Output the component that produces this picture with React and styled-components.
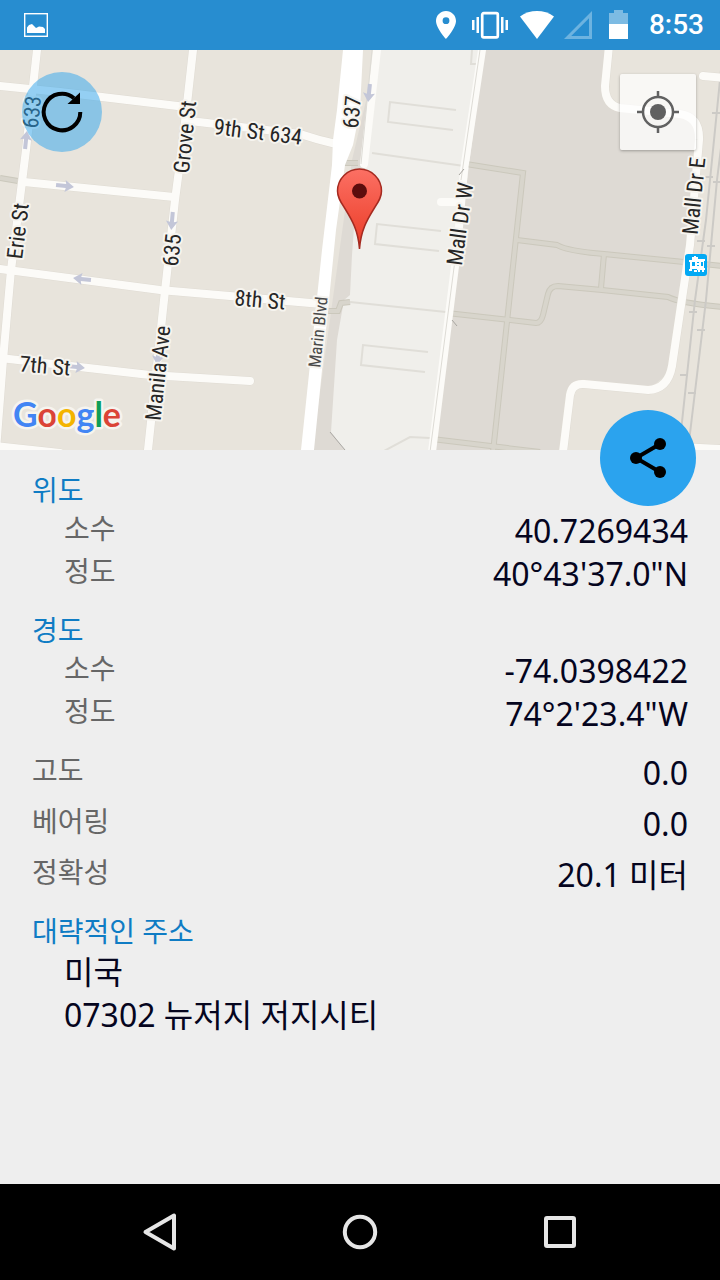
import React, { Fragment } from 'react';
import styled, { createGlobalStyle, css } from 'styled-components';

const GlobalStyle = createGlobalStyle`
  * {
    box-sizing: border-box;
  }
  body {
    margin: 0;
    background: #eeeeee;
    font-family: 'Noto Sans', 'Noto Sans CJK KR', sans-serif;
  }
  dl, dd, h2, p {
    margin: 0;
  }
`;

const Screen = styled.div`
  display: flex;
  flex-direction: column;
  min-height: 100vh;
`;

const StatusBar = styled.header`
  display: flex;
  align-items: center;
  gap: 12px;
  height: 50px;
  padding: 0 16px 0 24px;
  background: #278dd0;
  color: #ffffff;
  svg {
    display: block;
    flex: none;
  }
`;

const Spacer = styled.span`
  flex: 1;
`;

const Clock = styled.time`
  margin-left: 9px;
  font: 500 28px/32px Roboto, sans-serif;
`;

const MapArea = styled.section`
  position: relative;
  height: 400px;
`;

const MapCanvas = styled.svg`
  display: block;
  width: 100%;
  height: 100%;
`;

const StreetName = styled.text`
  font-family: 'Roboto Condensed', 'Liberation Sans Narrow', Roboto, sans-serif;
  font-size: ${({ $small }) => ($small ? '17px' : '22px')};
  fill: ${({ $small }) => ($small ? '#4a4a4a' : '#262626')};
  stroke: #f6f4ef;
  stroke-width: 4px;
  stroke-linejoin: round;
  paint-order: stroke;
  text-anchor: middle;
  dominant-baseline: central;
`;

const Brand = styled.text`
  font-family: Lato, sans-serif;
  font-size: 34px;
  font-weight: 700;
  stroke: #f6f4ef;
  stroke-width: 5px;
  stroke-linejoin: round;
  paint-order: stroke;
`;

const overMap = css`
  position: absolute;
  display: flex;
  align-items: center;
  justify-content: center;
  padding: 0;
  border: 0;
  cursor: pointer;
`;

const RefreshButton = styled.button`
  ${overMap}
  top: 22px;
  left: 22px;
  width: 80px;
  height: 80px;
  border-radius: 50%;
  background: rgba(43, 163, 238, 0.5);
`;

const LocateButton = styled.button`
  ${overMap}
  top: 24px;
  right: 24px;
  width: 76px;
  height: 76px;
  border-radius: 2px;
  background: rgba(255, 255, 255, 0.72);
  box-shadow: 0 1px 3px rgba(0, 0, 0, 0.3);
`;

const ShareButton = styled.button`
  ${overMap}
  right: 24px;
  bottom: -56px;
  width: 96px;
  height: 96px;
  border-radius: 50%;
  background: #2ba3ee;
`;

const Details = styled.main`
  display: flex;
  flex: 1;
  flex-direction: column;
  gap: 16px;
  padding: 21px 32px;
`;

const GroupTitle = styled.h2`
  color: #0f7cc4;
  font-size: 28px;
  font-weight: 400;
  line-height: 38px;
`;

const Rows = styled.dl`
  display: flex;
  flex-direction: column;
  gap: ${({ $loose }) => ($loose ? '8px' : '0')};
  padding-left: ${({ $indent }) => ($indent ? '32px' : '0')};
`;

const Row = styled.div`
  display: flex;
  align-items: flex-start;
  justify-content: space-between;
`;

const Label = styled.dt`
  color: #666666;
  font-size: 28px;
  line-height: 38px;
`;

const Value = styled.dd`
  color: #05051e;
  font-size: 32px;
  line-height: 43px;
`;

const Address = styled.p`
  padding-left: 32px;
  color: #05051e;
  font-size: 32px;
  line-height: 43px;
`;

const NavBar = styled.nav`
  display: flex;
  align-items: center;
  justify-content: center;
  gap: 104px;
  height: 96px;
  background: #000000;
`;

const NavButton = styled.button`
  display: flex;
  align-items: center;
  justify-content: center;
  width: 96px;
  height: 96px;
  padding: 0;
  border: 0;
  background: transparent;
  cursor: pointer;
`;

const coordinates = [
  { title: '위도', rows: [['소수', '40.7269434'], ['정도', '40°43\'37.0"N']] },
  { title: '경도', rows: [['소수', '-74.0398422'], ['정도', '74°2\'23.4"W']] },
];

const readings = [
  ['고도', '0.0'],
  ['베어링', '0.0'],
  ['정확성', '20.1 미터'],
];

const streets = [
  'M37 50L26 150L11 270L3 360L-4 450',
  'M193 50L183 140L175 200L164 300L148 450',
  'M0 86L60 92L186 107',
  'M190 121L300 134Q318 140 336 144',
  'M24 182L174 197',
  'M0 269L160 290L322 304',
  'M0 358L150 375L250 381',
  'M-4 446L60 453',
  'M609 46L605 86Q605 105 620 108L680 114Q700 117 699 140L690 245L672 366Q668 389 648 390L584 384Q572 383 570 395L563 452',
  'M703 76L726 78',
  'M680 447L722 449',
];

const footpaths = [
  'M466 164L523 173L493 452',
  'M447 313L536 323Q541 323 543 315L548 294Q550 286 558 286L602 290L668 297Q680 303 722 307',
  'M517 240L557 245Q567 251 604 254L684 262L722 266',
  'M604 254L601 288',
  'M432 439L540 452',
  'M0 178L18 181',
  'M326 311L338 311L341 303L350 302',
  'M343 163L358 163',
];

const faintLines = [
  'M372 153L464 166',
  'M350 302L446 312',
  'M384 451L410 437L430 438',
  'M456 110L390 102L388 122L453 130',
  'M441 231L377 224L375 244L439 251',
  'M428 352L363 345L361 365L425 372',
  'M472 50L471 64L476 64',
];

const arrows = [
  [65, 186, 6],
  [172, 221, 95],
  [82, 279, 186],
  [76, 367, 6],
  [26, 140, -84],
  [369, 93, 96],
  [158, 356, 96],
];

const labels = [
  ['633', 32, 112, -84],
  ['Erie St', 18, 231, -83],
  ['Grove St', 185, 137, -84],
  ['635', 172, 250, -84],
  ['Manila Ave', 158, 373, -84],
  ['9th St 634', 258, 132, 7],
  ['8th St', 260, 300, 5],
  ['7th St', 45, 366, 5],
  ['637', 352, 112, -85],
  ['Mall Dr W', 460, 224, -82],
  ['Mall Dr E', 694, 196, -84],
];

const ticks = [
  [716, 113], [709, 177], [717, 182], [701, 241], [711, 246],
  [693, 312], [701, 330], [684, 375], [692, 393],
];

const StreetMap = () => (
  <MapCanvas viewBox='0 50 720 400' preserveAspectRatio='xMidYMid slice' role='img' aria-label='Map'>
    <rect y='50' width='720' height='400' fill='#e8e4dc' />
    <path
      d='M352 160L378 50H607L605 90L620 108L680 114L699 130L690 245L672 370L648 390L582 384L570 392L563 450H312Z'
      fill='#dedad4'
    />
    <path d='M378 50H484L432 450H345L331 432L337 340L344 300L350 295L352 255L356 200L366 165Z' fill='#f0efeb' />
    <path d='M330 432L345 450' stroke='#aaa8a4' />
    {/* footpaths are a pale strip with a darker edge */}
    <g fill='none' stroke='#cbc8bc' strokeWidth='6'>
      {footpaths.map(d => <path key={d} d={d} />)}
    </g>
    <g fill='none' stroke='#d8d5cc' strokeWidth='4'>
      {footpaths.map(d => <path key={d} d={d} />)}
    </g>
    <g fill='none' stroke='#e0ded8' strokeWidth='2'>
      {faintLines.map(d => <path key={d} d={d} />)}
    </g>
    <g fill='none' stroke='#cccac6' strokeWidth='2'>
      <path d='M722 60L706 220L695 300L679 450' />
      <path d='M732 60L717 180L706 300L688 450' />
      {ticks.map(([x, y]) => <path key={`${x}-${y}`} d={`M${x - 4} ${y}h8`} />)}
    </g>
    <g fill='none' stroke='#dfdbd3' strokeWidth='9' strokeLinecap='round'>
      {streets.map(d => <path key={d} d={d} />)}
    </g>
    <g fill='none' stroke='#fcfbf8' strokeWidth='8' strokeLinecap='round'>
      {streets.map(d => <path key={d} d={d} />)}
      <path d='M377 50L364 164' />
      <path d='M482 50L464 170L457 250L432 452' />
      <path d='M441 202H458' />
    </g>
    <path d='M372 50L361 164M480 50L461 180M455 260L430 452' fill='none' stroke='#dddbd5' />
    <path d='M452 320l5 6M459 175l5-6' stroke='#a8a6a1' />
    <path
      d='M343 50H363L360 110L353 145L345 165L336 230L314 450H301L322 250L332 165L333 140L337 110Z'
      fill='#ffffff'
    />
    <g fill='#c3c6d8'>
      {arrows.map(([x, y, angle]) => (
        <path
          key={`${x}-${y}`}
          d='M-9-2H1L0-6L9 0L0 6L1 2H-9Z'
          transform={`translate(${x} ${y}) rotate(${angle})`}
        />
      ))}
    </g>
    {labels.map(([name, x, y, angle]) => (
      <StreetName key={name} transform={`translate(${x} ${y}) rotate(${angle})`}>{name}</StreetName>
    ))}
    <StreetName $small transform='translate(318 332) rotate(-84)'>Marin Blvd</StreetName>
    <rect x='685' y='254' width='22' height='22' rx='3' fill='#03a9f4' />
    <path
      d='M689 260h3v-3h2v-1h2v1h2v2h7v2h-1v7h1v2h-8v-1h-5v2h-3v-2h1v-7h-1zM692 262v4h3v-4zM697 262v1h2v-1zM697 265v1h2v-1zM701 262v4h2v-4zM694 270h3v2h-3zM698 270h2v2h-2zM702 270h2v2h-2z'
      fill='#ffffff'
      fillRule='evenodd'
    />
    <defs>
      <linearGradient id='marker' x1='0' y1='0' x2='0' y2='1'>
        <stop offset='0' stopColor='#fc7064' />
        <stop offset='1' stopColor='#ea3a24' />
      </linearGradient>
    </defs>
    <path
      d='M359.500 249C358 228 350 217 344 207C340 201 337.500 197 337.500 191A22 22 0 0 1 381.500 191C381.500 197 379 201 375 207C369 217 361 228 359.500 249Z'
      fill='url(#marker)'
      stroke='#a52a20'
      strokeWidth='1.500'
    />
    <circle cx='359.500' cy='191' r='7.500' fill='#5c0d0d' />
    <Brand x='13' y='427'>
      <tspan fill='#4285f4'>G</tspan>
      <tspan fill='#db4437'>o</tspan>
      <tspan fill='#f4b400'>o</tspan>
      <tspan fill='#4285f4'>g</tspan>
      <tspan fill='#0f9d58'>l</tspan>
      <tspan fill='#db4437'>e</tspan>
    </Brand>
  </MapCanvas>
);

const StatusIcons = () => (
  <Fragment>
    <svg width='24' height='30' viewBox='0 0 24 30' fill='#ffffff'>
      <path fillRule='evenodd' d='M10 1C4.500 1 0 5.400 0 11C0 18 10 29 10 29S20 18 20 11C20 5.400 15.500 1 10 1ZM10 7.300A3.400 3.400 0 1 1 10 14.100A3.400 3.400 0 0 1 10 7.300Z' />
    </svg>
    <svg width='36' height='30' viewBox='0 0 36 30' fill='#ffffff'>
      <path d='M0 10h2.500v10H0zM4.500 7h2.500v16H4.500zM29 7h2.500v16H29zM33.500 10H36v10h-2.500z' />
      <rect x='10.200' y='3.200' width='15.600' height='24.100' rx='1.500' fill='none' stroke='#ffffff' strokeWidth='2.700' />
    </svg>
    <svg width='34' height='30' viewBox='0 0 34 30'>
      <path d='M0 6.500C5 2.800 11 1 17 1S29 2.800 34 6.500L17 29Z' fill='#ffffff' />
    </svg>
    <svg width='26' height='30' viewBox='0 0 26 30' overflow='visible'>
      <path fillRule='evenodd' d='M26 1V29H-2ZM23 8.200L5.200 26H23Z' fill='#6db3e0' />
    </svg>
    <svg width='24' height='30' viewBox='0 0 24 30'>
      <path d='M5 14V3h5V0h9v3h5v11z' fill='#7dbbe3' />
      <path d='M5 14h19v15H5z' fill='#ffffff' />
    </svg>
  </Fragment>
);

const App = () => (
  <Screen>
    <GlobalStyle />
    <StatusBar>
      <svg width='24' height='24' viewBox='0 0 24 24'>
        <rect x='0.700' y='0.700' width='22.600' height='22.600' fill='none' stroke='#ffffff' strokeWidth='1.400' />
        <path d='M3 20V14.500L5 12L8 11L10 13L12 15L15 13.500L19 14L21 16V20Z' fill='#ffffff' />
      </svg>
      <Spacer />
      <StatusIcons />
      <Clock>8:53</Clock>
    </StatusBar>
    <MapArea>
      <StreetMap />
      <RefreshButton aria-label='Refresh'>
        <svg width='42' height='42' viewBox='0 0 42 42'>
          <path d='M39.300 21A18.300 18.300 0 1 1 33 7.200' fill='none' stroke='#000000' strokeWidth='4' />
          <path d='M39 1.500V13H26.500Z' fill='#000000' />
        </svg>
      </RefreshButton>
      <LocateButton aria-label='My location'>
        <svg width='42' height='42' viewBox='0 0 42 42' fill='none' stroke='#616161'>
          <circle cx='21' cy='21' r='15' strokeWidth='2.500' />
          <circle cx='21' cy='21' r='8' fill='#616161' stroke='none' />
          <path d='M21 0V6M21 36V42M0 21H6M36 21H42' strokeWidth='2.500' />
        </svg>
      </LocateButton>
      <ShareButton aria-label='Share'>
        <svg width='40' height='40' viewBox='0 0 40 40'>
          <path d='M32 6L8 20L32 34' fill='none' stroke='#000000' strokeWidth='4' />
          <circle cx='8' cy='20' r='6' />
          <circle cx='32' cy='6' r='6' />
          <circle cx='32' cy='34' r='6' />
        </svg>
      </ShareButton>
    </MapArea>
    <Details>
      {coordinates.map(({ title, rows }) => (
        <section key={title}>
          <GroupTitle>{title}</GroupTitle>
          <Rows $indent>
            {rows.map(([label, value]) => (
              <Row key={label}>
                <Label>{label}</Label>
                <Value>{value}</Value>
              </Row>
            ))}
          </Rows>
        </section>
      ))}
      <Rows $loose>
        {readings.map(([label, value]) => (
          <Row key={label}>
            <Label>{label}</Label>
            <Value>{value}</Value>
          </Row>
        ))}
      </Rows>
      <section>
        <GroupTitle>대략적인 주소</GroupTitle>
        <Address>미국</Address>
        <Address>07302 뉴저지 저지시티</Address>
      </section>
    </Details>
    <NavBar>
      <NavButton aria-label='Back'>
        <svg width='40' height='40' viewBox='0 0 40 40'>
          <path d='M34 3.500V36.500L5.500 20Z' fill='none' stroke='#e6e6e6' strokeWidth='4' strokeLinejoin='round' />
        </svg>
      </NavButton>
      <NavButton aria-label='Home'>
        <svg width='40' height='40' viewBox='0 0 40 40'>
          <circle cx='20' cy='20' r='15.200' fill='none' stroke='#e6e6e6' strokeWidth='4' />
        </svg>
      </NavButton>
      <NavButton aria-label='Recent apps'>
        <svg width='40' height='40' viewBox='0 0 40 40'>
          <rect x='6' y='6' width='28' height='28' rx='1' fill='none' stroke='#e6e6e6' strokeWidth='4' />
        </svg>
      </NavButton>
    </NavBar>
  </Screen>
);

export default App;
